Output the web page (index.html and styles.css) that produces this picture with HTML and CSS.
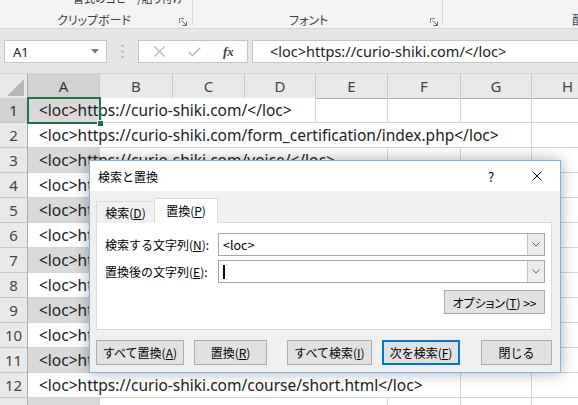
FILE: index.html
```html
<!DOCTYPE html>
<html lang="ja">
<head>
<meta charset="utf-8">
<title>検索と置換</title>
<link rel="stylesheet" href="styles.css">
</head>
<body>
<div class="ribbon">
  <div class="group g1">
    <div class="cmd"><span class="brush"></span><span>書式のコピー/貼り付け</span></div>
    <div class="glabel"><span>クリップボード</span><svg class="launch" width="8" height="8" viewBox="0 0 8 8"><path d="M0.5 5V0.5H5" fill="none" stroke="#8a8a8a"/><path d="M2.5 2.5L7 7M7.5 3.5V7.5H3.5" fill="none" stroke="#6a6a6a"/></svg></div>
  </div>
  <div class="group g2">
    <div class="cmd"></div>
    <div class="glabel"><span>フォント</span><svg class="launch" width="8" height="8" viewBox="0 0 8 8"><path d="M0.5 5V0.5H5" fill="none" stroke="#8a8a8a"/><path d="M2.5 2.5L7 7M7.5 3.5V7.5H3.5" fill="none" stroke="#6a6a6a"/></svg></div>
  </div>
  <div class="group g3">
    <div class="cmd"></div>
    <div class="glabel"><span>配置</span></div>
  </div>
</div>

<div class="fbar">
  <div class="namebox"><span>A1</span><svg width="8" height="5" viewBox="0 0 8 5"><path d="M0 0H8L4 4.5Z" fill="#7a7a7a"/></svg></div>
  <div class="grip"><svg width="3" height="13" viewBox="0 0 3 13"><rect x="0.5" y="0" width="2" height="2" fill="#b0b0b0"/><rect x="0.5" y="5.5" width="2" height="2" fill="#b0b0b0"/><rect x="0.5" y="11" width="2" height="2" fill="#b0b0b0"/></svg></div>
  <div class="fbtns">
    <svg class="fx-x" width="11" height="11" viewBox="0 0 11 11"><path d="M0.5 0.5L10.5 10.5M10.5 0.5L0.5 10.5" stroke="#b8b8b8" stroke-width="1.3"/></svg>
    <svg class="fx-ok" width="13" height="10" viewBox="0 0 13 10"><path d="M0.8 5L4.5 8.8L12.3 0.8" fill="none" stroke="#b8b8b8" stroke-width="1.5"/></svg>
    <span class="fx">fx</span>
  </div>
  <div class="finput">&lt;loc&gt;https://curio-shiki.com/&lt;/loc&gt;</div>
</div>

<div class="sheet">
  <div class="hrow">
    <div class="corner"><span class="tri"></span></div>
    <div class="ch sel">A</div><div class="ch">B</div><div class="ch">C</div><div class="ch">D</div><div class="ch">E</div><div class="ch">F</div><div class="ch">G</div><div class="ch">H</div>
  </div>
  <div class="row odd">
    <div class="rh sel">1</div>
    <div class="cell txt s4">&lt;loc&gt;https://curio-shiki.com/&lt;/loc&gt;<span class="selbox"><span class="handle"></span></span></div>
    <div class="cell"></div><div class="cell"></div><div class="cell"></div><div class="cell"></div>
  </div>
  <div class="row">
    <div class="rh">2</div>
    <div class="cell txt s7">&lt;loc&gt;https://curio-shiki.com/form_certification/index.php&lt;/loc&gt;</div>
    <div class="cell"></div>
  </div>
  <div class="row odd">
    <div class="rh">3</div>
    <div class="cell txt s5">&lt;loc&gt;https://curio-shiki.com/voice/&lt;/loc&gt;</div>
    <div class="cell"></div><div class="cell"></div><div class="cell"></div>
  </div>
  <div class="row">
    <div class="rh">4</div>
    <div class="cell txt s6">&lt;loc&gt;https://curio-shiki.com/company/&lt;/loc&gt;</div>
    <div class="cell"></div><div class="cell"></div>
  </div>
  <div class="row odd">
    <div class="rh">5</div>
    <div class="cell txt s6">&lt;loc&gt;https://curio-shiki.com/service/&lt;/loc&gt;</div>
    <div class="cell"></div><div class="cell"></div>
  </div>
  <div class="row">
    <div class="rh">6</div>
    <div class="cell txt s6">&lt;loc&gt;https://curio-shiki.com/course/&lt;/loc&gt;</div>
    <div class="cell"></div><div class="cell"></div>
  </div>
  <div class="row odd">
    <div class="rh">7</div>
    <div class="cell txt s6">&lt;loc&gt;https://curio-shiki.com/course/long.html&lt;/loc&gt;</div>
    <div class="cell"></div><div class="cell"></div>
  </div>
  <div class="row">
    <div class="rh">8</div>
    <div class="cell txt s6">&lt;loc&gt;https://curio-shiki.com/news/&lt;/loc&gt;</div>
    <div class="cell"></div><div class="cell"></div>
  </div>
  <div class="row odd">
    <div class="rh">9</div>
    <div class="cell txt s6">&lt;loc&gt;https://curio-shiki.com/access/&lt;/loc&gt;</div>
    <div class="cell"></div><div class="cell"></div>
  </div>
  <div class="row">
    <div class="rh">10</div>
    <div class="cell txt s6">&lt;loc&gt;https://curio-shiki.com/contact/&lt;/loc&gt;</div>
    <div class="cell"></div><div class="cell"></div>
  </div>
  <div class="row odd">
    <div class="rh">11</div>
    <div class="cell txt s6">&lt;loc&gt;https://curio-shiki.com/privacy/&lt;/loc&gt;</div>
    <div class="cell"></div><div class="cell"></div>
  </div>
  <div class="row">
    <div class="rh">12</div>
    <div class="cell txt s6">&lt;loc&gt;https://curio-shiki.com/course/short.html&lt;/loc&gt;</div>
    <div class="cell"></div><div class="cell"></div>
  </div>
  <div class="row odd last">
    <div class="rh">13</div>
    <div class="cell txt s5">&lt;loc&gt;https://curio-shiki.com/blog/&lt;/loc&gt;</div>
    <div class="cell"></div><div class="cell"></div><div class="cell"></div>
  </div>
</div>

<div class="dialog">
  <div class="titlebar">
    <span class="title">検索と置換</span>
    <span class="tbtn">?</span>
    <span class="tbtn"><svg width="10" height="10" viewBox="0 0 10 10"><path d="M0.5 0.5L9.5 9.5M9.5 0.5L0.5 9.5" stroke="#111" stroke-width="1"/></svg></span>
  </div>
  <div class="dbody">
    <div class="tabs">
      <div class="tab">検索(<u>D</u>)</div>
      <div class="tab active">置換(<u>P</u>)</div>
    </div>
    <div class="panel">
      <div class="frow">
        <span class="flabel">検索する文字列(<u>N</u>):</span>
        <div class="combo"><span class="cval">&lt;loc&gt;</span><span class="drop"><svg width="8" height="5" viewBox="0 0 8 5"><path d="M0.5 0.5L4 4L7.5 0.5" fill="none" stroke="#606060"/></svg></span></div>
      </div>
      <div class="frow">
        <span class="flabel">置換後の文字列(<u>E</u>):</span>
        <div class="combo"><span class="cval"><span class="cursor"></span></span><span class="drop"><svg width="8" height="5" viewBox="0 0 8 5"><path d="M0.5 0.5L4 4L7.5 0.5" fill="none" stroke="#606060"/></svg></span></div>
      </div>
      <div class="optrow"><div class="btn opt"><span class="palt">オプション</span>(<u>T</u>) &gt;&gt;</div></div>
    </div>
    <div class="btnrow">
      <div class="btn b1">すべて置換(<u>A</u>)</div>
      <div class="btn b2">置換(<u>R</u>)</div>
      <div class="btn b3">すべて検索(<u>I</u>)</div>
      <div class="btn b4 def">次を検索(<u>F</u>)</div>
      <div class="btn b5">閉じる</div>
    </div>
  </div>
</div>
</body>
</html>
```

FILE: styles.css
```css
html, body {
  margin: 0;
  padding: 0;
}
body {
  width: 578px;
  height: 405px;
  overflow: hidden;
  position: relative;
  background: #ffffff;
  font-family: "Noto Sans", "Noto Sans CJK JP", sans-serif;
}

/* ---------- ribbon ---------- */
.ribbon {
  height: 28px;
  background: #f3f3f3;
  border-bottom: 1px solid #d4d4d4;
  display: flex;
  overflow: hidden;
  font-family: "Noto Sans CJK JP", sans-serif;
  font-size: 12px;
  color: #444;
  font-feature-settings: "palt";
}
.group {
  height: 25px;
  box-sizing: border-box;
  flex-shrink: 0;
}
.g1 { width: 193px; border-right: 1px solid #d4d4d4; }
.g2 { width: 250px; border-right: 1px solid #d4d4d4; }
.g3 { width: 200px; }
.cmd {
  height: 16px;
  margin-top: -10px;
  line-height: 16px;
  display: flex;
  align-items: center;
  padding-left: 58px;
  font-size: 11px;
  color: #333;
  white-space: nowrap;
}
.brush {
  width: 6px;
  height: 6px;
  background: #e8a33c;
  transform: rotate(45deg);
  margin-right: 9px;
  margin-top: -8px;
}
.glabel {
  margin-top: 6px;
  height: 16px;
  line-height: 16px;
  display: flex;
  align-items: center;
  justify-content: space-between;
  white-space: nowrap;
}
.g1 .glabel { padding: 0 5px 0 57px; }
.g2 .glabel { padding: 0 4px 0 96px; }
.g3 .glabel { padding-left: 129px; justify-content: flex-start; }
.launch { margin-top: 3px; }

/* ---------- formula bar ---------- */
.fbar {
  height: 44px;
  background: #e6e6e6;
  box-sizing: border-box;
  padding: 11px 0 10px 4px;
  display: flex;
  align-items: stretch;
}
.namebox {
  width: 103px;
  box-sizing: border-box;
  background: #fff;
  border: 1px solid #c6c6c6;
  display: flex;
  align-items: center;
  justify-content: space-between;
  padding: 0 7px 0 8px;
  font-size: 13px;
  color: #222;
}
.grip {
  width: 31px;
  display: flex;
  align-items: center;
  justify-content: center;
}
.fbtns {
  width: 110px;
  box-sizing: border-box;
  background: #fff;
  border: 1px solid #c6c6c6;
  display: flex;
  align-items: center;
}
.fx-x { margin-left: 15px; }
.fx-ok { margin-left: 23px; }
.fx {
  margin-left: 22px;
  font-family: "Liberation Serif", serif;
  font-style: italic;
  font-weight: bold;
  font-size: 13px;
  color: #444;
}
.finput {
  flex: 1;
  margin-left: 4px;
  background: #fff;
  border: 1px solid #c6c6c6;
  border-right: none;
  padding-left: 17px;
  font-size: 14.5px;
  line-height: 21px;
  color: #222;
  white-space: nowrap;
  overflow: hidden;
}

/* ---------- sheet ---------- */
.sheet {
  border-top: 1px solid #d4d4d4;
  width: 604px;
}
.hrow, .row {
  display: grid;
  grid-template-columns: 28px 72px 73px 72px 71px 72px 73px 71px 72px;
}
.hrow { height: 24px; }
.row { height: 25px; }
.corner {
  background: #e9e9e9;
  border-right: 1px solid #ababab;
  border-bottom: 1px solid #ababab;
  box-sizing: border-box;
  display: flex;
  align-items: flex-end;
  justify-content: flex-end;
  padding: 0 3px 2px 0;
}
.tri {
  width: 17px;
  height: 17px;
  background: #b8b8b8;
  clip-path: polygon(100% 0, 100% 100%, 0 100%);
}
.ch {
  background: #e9e9e9;
  border-right: 1px solid #c9c9c9;
  border-bottom: 1px solid #ababab;
  box-sizing: border-box;
  text-align: center;
  font-size: 15px;
  line-height: 24px;
  color: #444;
}
.ch.sel { background: #d2d2d2; color: #333; }
.rh {
  background: #e9e9e9;
  border-right: 1px solid #ababab;
  border-bottom: 1px solid #c9c9c9;
  box-sizing: border-box;
  text-align: center;
  font-size: 15px;
  line-height: 24px;
  color: #444;
}
.rh.sel { background: #d2d2d2; color: #333; }
.cell {
  border-right: 1px solid #d4d4d4;
  border-bottom: 1px solid #d4d4d4;
  box-sizing: border-box;
}
.txt {
  position: relative;
  padding-left: 11px;
  font-size: 15.5px;
  line-height: 24px;
  color: #222;
  white-space: nowrap;
}
.last .txt, .last .rh { line-height: 28px; }
.odd .txt {
  background: linear-gradient(to right, #d9d9d9 72px, #ffffff 72px);
}
.s4 { grid-column: span 4; }
.s5 { grid-column: span 5; }
.s6 { grid-column: span 6; }
.s7 { grid-column: span 7; }
.selbox {
  position: absolute;
  left: -1px;
  top: -1px;
  width: 74px;
  height: 27px;
  box-sizing: border-box;
  border: 2px solid #217346;
  z-index: 2;
}
.handle {
  position: absolute;
  right: -5px;
  bottom: -5px;
  width: 5px;
  height: 5px;
  background: #217346;
  border: 1px solid #fff;
}

/* ---------- dialog ---------- */
.dialog {
  position: absolute;
  left: 89px;
  top: 160px;
  width: 472px;
  height: 213px;
  box-sizing: border-box;
  border: 1px solid #7db5ec;
  background: #f0f0f0;
  box-shadow: 0 0 14px rgba(0, 0, 0, 0.32);
  font-family: "Noto Sans CJK JP", sans-serif;
  font-size: 12px;
  color: #000;
  z-index: 10;
}
.titlebar {
  height: 30px;
  background: #fff;
  display: flex;
  align-items: center;
}
.title { flex: 1; padding-left: 8px; }
.tbtn {
  width: 46px;
  height: 30px;
  display: flex;
  align-items: center;
  justify-content: center;
  font-size: 13px;
}
.dbody { padding: 8px 0 0 6px; }
.tabs {
  display: flex;
  align-items: flex-end;
  height: 24px;
  margin-bottom: -1px;
  position: relative;
  z-index: 1;
}
.tab {
  width: 59px;
  height: 22px;
  box-sizing: border-box;
  border: 1px solid #d9d9d9;
  border-bottom: none;
  background: #f0f0f0;
  display: flex;
  align-items: center;
  justify-content: center;
}
.tab.active {
  width: 64px;
  height: 25px;
  margin-left: -1px;
  background: #fff;
  padding-bottom: 1px;
}
.panel {
  width: 456px;
  height: 108px;
  box-sizing: border-box;
  border: 1px solid #d9d9d9;
  background: #fff;
  padding: 10px 6px 0 8px;
}
.frow {
  display: flex;
  align-items: center;
  height: 23px;
  margin-bottom: 4px;
}
.flabel { width: 113px; white-space: nowrap; }
.combo {
  flex: 1;
  height: 23px;
  box-sizing: border-box;
  border: 1px solid #a6a6a6;
  display: flex;
}
.cval {
  flex: 1;
  display: flex;
  align-items: center;
  padding-left: 4px;
  font-size: 12.5px;
}
.cursor {
  width: 2px;
  height: 14px;
  background: #000;
}
.drop {
  width: 16px;
  border-left: 1px solid #c4c4c4;
  background: #ececec;
  display: flex;
  align-items: center;
  justify-content: center;
}
.optrow {
  display: flex;
  justify-content: flex-end;
  margin-top: 7px;
}
.btn {
  height: 25px;
  box-sizing: border-box;
  background: #e1e1e1;
  border: 1px solid #adadad;
  display: flex;
  align-items: center;
  justify-content: center;
  white-space: nowrap;
}
.opt { width: 101px; height: 24px; }
.palt { font-feature-settings: "palt"; }
.btnrow { display: flex; margin-top: 10px; }
.b1 { width: 88px; }
.b2 { width: 73px; margin-left: 10px; }
.b3 { width: 85px; margin-left: 20px; }
.b4 { width: 78px; margin-left: 10px; }
.b5 { width: 71px; margin-left: 21px; }
.def { border: 2px solid #0078d7; }
u { text-underline-offset: 1px; }
```
